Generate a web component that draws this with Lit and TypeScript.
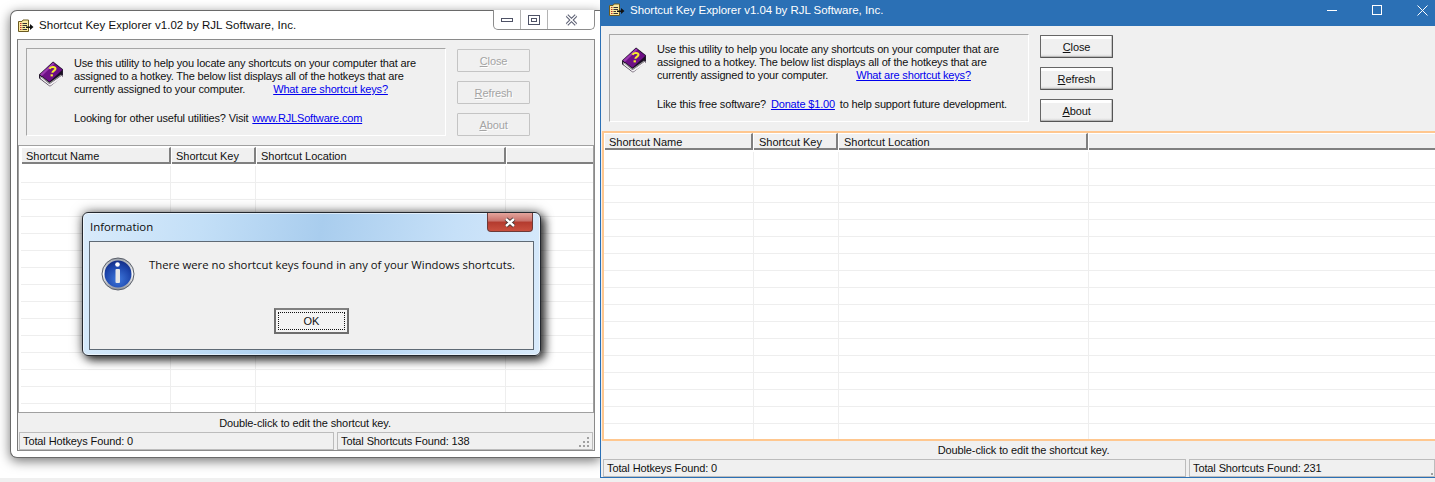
import { LitElement, html, css, svg } from "lit";
import { customElement } from "lit/decorators.js";

const book = html`<svg class="book" width="26" height="26" viewBox="1 1 24 25">
  <path d="M1.5 14 L15 1.5 L24.5 9 L24.5 16 L12 25.5 L1.5 17.5 Z" fill="#1b0f24"/>
  <path d="M2.5 15.5 L11.5 23 L24 14.5 L24 17 L12 25 L3 18 Z" fill="#f4f0f4"/>
  <path d="M4 16.5 L11.5 22.5 L23 14.5" fill="none" stroke="#9a9a9a" stroke-width="1"/>
  <path d="M2.5 14 L15 2.5 L24 9.5 L11.5 21 Z" fill="#6e0f86"/>
  <path d="M2.5 14 L15 2.5 L16.5 3.7 L4.2 15.4 Z" fill="#9c3ab0"/>
  <path d="M11.5 8.5 C12.5 6.3 17 6 17.3 8.3 C17.5 10 14.5 10.4 14.3 12.3" fill="none" stroke="#f6ee2c" stroke-width="2"/>
  <rect x="12.6" y="13.8" width="2.2" height="2" fill="#f6ee2c"/>
</svg>`;

const folder = html`<svg class="folder" width="16" height="14" viewBox="0 0 16 14">
  <path d="M0.5 2.5 H4 L5 1 H10.5 V12.5 H0.5 Z" fill="#fbe9a0" stroke="#6b5a20"/>
  <path d="M2 4.5 H3.5 M2 6.5 H3.5 M2 8.5 H3.5 M2 10.5 H3.5" stroke="#c03030"/>
  <path d="M4.5 4.5 H9 M4.5 6.5 H9 M4.5 8.5 H7 M4.5 10.5 H9" stroke="#333"/>
  <path d="M8 7.5 H12 V5 L15.5 8 L12 11 V9 H8 Z" fill="#111"/>
</svg>`;

const info = html`<svg width="34" height="34" viewBox="0 0 34 34">
  <defs>
    <radialGradient id="ib" cx="50%" cy="70%" r="70%">
      <stop offset="0" stop-color="#3f78dc"/><stop offset="0.7" stop-color="#1c44aa"/><stop offset="1" stop-color="#122c84"/>
    </radialGradient>
    <linearGradient id="ir" x1="0" y1="0" x2="0" y2="1">
      <stop offset="0" stop-color="#9aa0a8"/><stop offset="0.5" stop-color="#ffffff"/><stop offset="1" stop-color="#8c9098"/>
    </linearGradient>
  </defs>
  <circle cx="17" cy="17" r="16" fill="url(#ir)" stroke="#5a5f6a"/>
  <circle cx="17" cy="17" r="13.5" fill="url(#ib)"/>
  <circle cx="16.5" cy="7.5" r="2.3" fill="#fff"/>
  <rect x="14.5" y="12" width="4.5" height="14" rx="1" fill="#e6e6e6"/>
</svg>`;

const grip = (dots: number[][], w: number, h: number) => svg`<svg class="grip" width=${w} height=${h} viewBox="0 0 ${w} ${h}">
  ${dots.map(([x, y]) => svg`<rect x=${x} y=${y} width="2" height="2" fill="#a0a0a0"/>`)}
</svg>`;

interface Cfg {
  cls: string;
  rows: number;
  lines: unknown;
  disabled: boolean;
  total: string;
  dots: number[][];
}

const Btn = (u: string, rest: string, disabled: boolean) =>
  html`<div class="btn ${disabled ? "off" : ""}"><span><u>${u}</u>${rest}</span></div>`;

const body = (c: Cfg) => html`
  <div class="top">
    <div class="group">
      ${book}
      <div class="copy">${c.lines}</div>
    </div>
    <div class="btns">
      ${Btn("C", "lose", c.disabled)}${Btn("R", "efresh", c.disabled)}${Btn("A", "bout", c.disabled)}
    </div>
  </div>
  <div class="tbl">
    <div class="cols hdr">
      <div>Shortcut Name</div><div>Shortcut Key</div><div>Shortcut Location</div><div></div>
    </div>
    <div class="rows">
      ${Array.from({ length: c.rows }, () => html`<div class="cols row"><i></i><i></i><i></i><i></i></div>`)}
    </div>
  </div>
  <div class="hint">Double-click to edit the shortcut key.</div>
  <div class="status">
    <div class="s1">Total Hotkeys Found: 0</div>
    <div class="s2">Total Shortcuts Found: ${c.total}${grip(c.dots, 14, 12)}</div>
  </div>`;

@customElement("app-root")
export class AppRoot extends LitElement {
  static styles = css`
    :host { display: block; position: relative; width: 1435px; height: 482px; overflow: hidden; background: #fff;
      font-family: "Liberation Sans", Arial, sans-serif; font-size: 11px; letter-spacing: -.11px; color: #111; }
    .strip { position: absolute; left: 0; right: 0; top: 478px; height: 4px; background: #f0f0f0; }
    .win { position: absolute; box-sizing: border-box; display: flex; flex-direction: column; }
    .w1 { left: 10px; top: 10px; width: 590px; height: 448px; background: #fff; border: 1px solid #6a6a6a; border-right: 0;
      border-radius: 7px 0 0 7px; padding: 0 5px 6px 6px; box-shadow: 0 3px 12px rgba(0,0,0,.55); }
    .w2 { left: 600px; top: 0; width: 835px; height: 478px; background: #f0f0f0; border-left: 1px solid #2b70b5; border-bottom: 1px solid #2b70b5; }
    .tb { display: flex; align-items: center; flex: none; position: relative; font-size: 11.5px; }
    .w1 .tb { height: 28px; letter-spacing: .04px; }
    .w2 .tb { height: 26px; margin-left: -1px; background: #2b70b5; color: #fff; padding: 0 0 6px 9px; box-sizing: border-box; letter-spacing: -.04px; }
    .folder { margin-right: 5px; flex: none; }
    .w1 .folder { margin-left: 1px; margin-top: 1px; }
    .caps1 { position: absolute; right: 0; top: -1px; width: 102px; height: 20px; box-sizing: border-box; display: grid; grid-template-columns: 27px 27px 1fr;
      border: 1px solid #8c8c8c; border-top: 0; border-radius: 0 0 5px 5px; background: #fff; }
    .caps1 > div { display: flex; align-items: center; justify-content: center; border-right: 1px solid #b4b4b4; }
    .caps1 > div:last-child { border-right: 0; }
    .caps2 { margin-left: auto; margin-right: -10px; display: grid; grid-template-columns: 45px 45px 45px; }
    .caps2 > div { display: flex; align-items: center; justify-content: center; height: 20px; }
    .panel { flex: 1; min-height: 0; display: flex; flex-direction: column; background: #f0f0f0; }
    .w1 .panel { border: 1px solid #8a8a8a; border-left-color: #777; }
    .top { display: flex; flex: none; height: 88px; box-sizing: content-box; padding: 8px 0 9px 8px; }
    .group { box-sizing: border-box; width: 420px; height: 88px; display: flex; border: 1px solid; border-color: #a6a6a6 #fff #fff #a6a6a6; }
    .book { margin: 12px 0 0 11px; flex: none; }
    .copy { margin: 8px 0 0 10px; line-height: 13px; white-space: nowrap; letter-spacing: -.17px; }
    .copy div { height: 13px; }
    .copy .gap { height: 16px; }
    .copy a { color: #00e; text-decoration: underline; }
    .pad { display: inline-block; }
    .btns { margin-left: 11px; display: flex; flex-direction: column; gap: 9px; padding-top: 1px; }
    .btn { box-sizing: border-box; width: 73px; height: 23px; display: flex; align-items: center; justify-content: center; border: 1px solid #666; border-radius: 1px;
      background: linear-gradient(#fff 0, #fff 3px, #f0f0f0 3px, #f0f0f0 18px, #d4d4d4 21px); border-right-color: #555; border-bottom-color: #555; box-shadow: -0.5px -0.5px 0 #999 inset; }
    .btn.off { border-color: #c4c4c4; background: #f0f0f0; box-shadow: none; color: #a4a4a4; text-shadow: 1px 1px 0 #fff; }
    .tbl { flex: none; display: flex; flex-direction: column; background: #fff; box-sizing: border-box; overflow: hidden; }
    .w1 .tbl { height: 268px; border: 1px solid #a0a0a0; padding: 1px 0 0 2px; }
    .w2 .tbl { height: 310px; border: 2px solid #ffc78f; border-right: 0; margin-left: 1px; }
    .w1 .cols { display: grid; grid-template-columns: 150px 85px 250px 1fr; }
    .w2 .cols { display: grid; grid-template-columns: 149px 85px 250px 1fr; }
    .w2 .row.cols { grid-template-columns: 150px 85px 250px 1fr; }
    .hdr { height: 17px; box-sizing: border-box; background: #f0f0f0; border-bottom: 2px solid #808080; flex: none; }
    .hdr > div { box-sizing: border-box; padding: 0 0 0 4px; line-height: 16px; letter-spacing: 0; border-left: 1px solid #fff; border-top: 1px solid #fff; border-right: 2px solid #808080; white-space: nowrap; }
    .hdr > div:last-child { border-right: 0; }
    .w2 .hdr > div + div { padding-left: 5px; }
    .rows { flex: 1; overflow: hidden; padding-top: 2px; }
    .row { height: 17px; box-sizing: border-box; border-bottom: 1px solid #eeeeee; }
    .row i { display: block; border-right: 1px solid #eeeeee; }
    .row i:last-child { border-right: 0; }
    .hint { flex: none; text-align: center; }
    .w1 .hint { height: 19px; line-height: 20px; padding-right: 2px; }
    .w2 .hint { height: 18px; line-height: 18px; padding-left: 11px; }
    .status { flex: none; display: grid; gap: 3px; height: 18px; }
    .w1 .status { grid-template-columns: 315px 1fr; padding: 0 1px; }
    .w2 .status { grid-template-columns: 583px 1fr; padding: 0 0 0 2px; }
    .status > div { box-sizing: border-box; position: relative; border: 1px solid #bcbcbc; padding-left: 3px; line-height: 16px; }
    .grip { position: absolute; right: 1px; bottom: 1px; }
    .dlg { position: absolute; left: 82px; top: 212px; width: 459px; height: 144px; box-sizing: border-box; border: 1px solid #24282e; border-radius: 6px;
      background: linear-gradient(100deg, #d9ebfb 0, #c3dff7 25%, #a9cdee 50%, #c6e0f8 78%, #d8eafb 100%);
      box-shadow: 4px 4px 10px rgba(0,0,0,.75), 0 0 12px rgba(0,0,0,.5), inset 0 0 0 1px rgba(255,255,255,.55); display: flex; flex-direction: column; padding: 0 6px 5px 6px; letter-spacing: 0; }
    .dtitle { height: 28px; flex: none; display: flex; align-items: center; padding: 0 0 2px 1px; box-sizing: border-box; font-family: "Open Sans", sans-serif; font-size: 11.4px; position: relative; color: #0c0c0c; }
    .dx { position: absolute; right: 1px; top: 0; width: 46px; height: 19px; box-sizing: border-box; border: 1px solid #6d3a38; border-top: 0; border-radius: 0 0 4px 4px;
      background: linear-gradient(#e4a59d 0, #c8716a 45%, #b33a2e 50%, #c9503f 100%); display: flex; align-items: center; justify-content: center; }
    .dbody { flex: 1; background: #f0f0f0; border: 1px solid #5f6a75; display: flex; flex-direction: column; }
    .dmain { display: flex; padding: 15px 0 0 11px; box-sizing: content-box; height: 50px; flex: none; }
    .dmain span { margin: 0 0 0 14px; font-family: "Open Sans", sans-serif; font-size: 11.33px; line-height: 16px; color: #111; white-space: nowrap; }
    .dfoot { display: flex; justify-content: center; padding-top: 1px; }
    .ok { box-sizing: border-box; width: 75px; height: 26px; border: 2px solid #6e6e6e; border-top-color: #808080; background: #f4f4f4; padding: 2px; }
    .ok span { display: flex; width: 100%; height: 100%; box-sizing: border-box; align-items: center; justify-content: center; border: 1px dotted #111; }
  `;

  render() {
    const c1: Cfg = {
      cls: "w1",
      rows: 15,
      disabled: true,
      total: "138",
      dots: [[10, 1], [6, 5], [10, 5], [2, 9], [6, 9], [10, 9]],
      lines: html`
        <div>Use this utility to help you locate any shortcuts on your computer that are</div>
        <div>assigned to a hotkey. The below list displays all of the hotkeys that are</div>
        <div>currently assigned to your computer.<span class="pad" style="width:28px"></span><a>What are shortcut keys?</a></div>
        <div class="gap"></div>
        <div>Looking for other useful utilities? Visit <span class="pad" style="width:1px"></span><a>www.RJLSoftware.com</a></div>`,
    };
    const c2: Cfg = {
      cls: "w2",
      rows: 18,
      disabled: false,
      total: "231",
      dots: [[12, 10]],
      lines: html`
        <div>Use this utility to help you locate any shortcuts on your computer that are</div>
        <div>assigned to a hotkey. The below list displays all of the hotkeys that are</div>
        <div>currently assigned to your computer.<span class="pad" style="width:28px"></span><a>What are shortcut keys?</a></div>
        <div class="gap"></div>
        <div>Like this free software? <span class="pad" style="width:2px"></span><a>Donate $1.00</a> <span class="pad" style="width:2px"></span>to help support future development.</div>`,
    };
    return html`
      <div class="strip"></div>
      <div class="win w1">
        <div class="tb">
          ${folder}<span class="t">Shortcut Key Explorer v1.02 by RJL Software, Inc.</span>
          <div class="caps1">
            <div><svg width="14" height="6"><rect x="1.5" y="1.5" width="11" height="3" fill="#fff" stroke="#4e5266"/></svg></div>
            <div><svg width="14" height="12"><rect x="1.5" y="1.5" width="11" height="9" fill="none" stroke="#4e5266"/><rect x="4.5" y="4.5" width="5" height="3" fill="none" stroke="#4e5266"/></svg></div>
            <div><svg width="13" height="12"><path d="M2 1.5 L6.5 6 L11 1.5 M2 10.5 L6.5 6 L11 10.5" fill="none" stroke="#5a5e72" stroke-width="3.4"/><path d="M2 1.5 L6.5 6 L11 1.5 M2 10.5 L6.5 6 L11 10.5" fill="none" stroke="#fff" stroke-width="1.4"/></svg></div>
          </div>
        </div>
        <div class="panel">${body(c1)}</div>
      </div>
      <div class="win w2">
        <div class="tb">
          ${folder}<span class="t">Shortcut Key Explorer v1.04 by RJL Software, Inc.</span>
          <div class="caps2">
            <div><svg width="11" height="11"><rect x="0" y="5" width="10" height="1" fill="#fff"/></svg></div>
            <div><svg width="11" height="11"><rect x="0.5" y="0.5" width="9" height="9" fill="none" stroke="#fff"/></svg></div>
            <div><svg width="11" height="11"><path d="M0.5 0.5 L10.5 10.5 M10.5 0.5 L0.5 10.5" stroke="#fff"/></svg></div>
          </div>
        </div>
        <div class="panel">${body(c2)}</div>
      </div>
      <div class="dlg">
        <div class="dtitle">Information
          <div class="dx"><svg width="14" height="11"><path d="M3 2 L11 9 M11 2 L3 9" stroke="#40302f" stroke-width="4"/><path d="M3 2 L11 9 M11 2 L3 9" stroke="#fff" stroke-width="2.4"/></svg></div>
        </div>
        <div class="dbody">
          <div class="dmain">${info}<span>There were no shortcut keys found in any of your Windows shortcuts.</span></div>
          <div class="dfoot"><div class="ok"><span>OK</span></div></div>
        </div>
      </div>`;
  }
}
